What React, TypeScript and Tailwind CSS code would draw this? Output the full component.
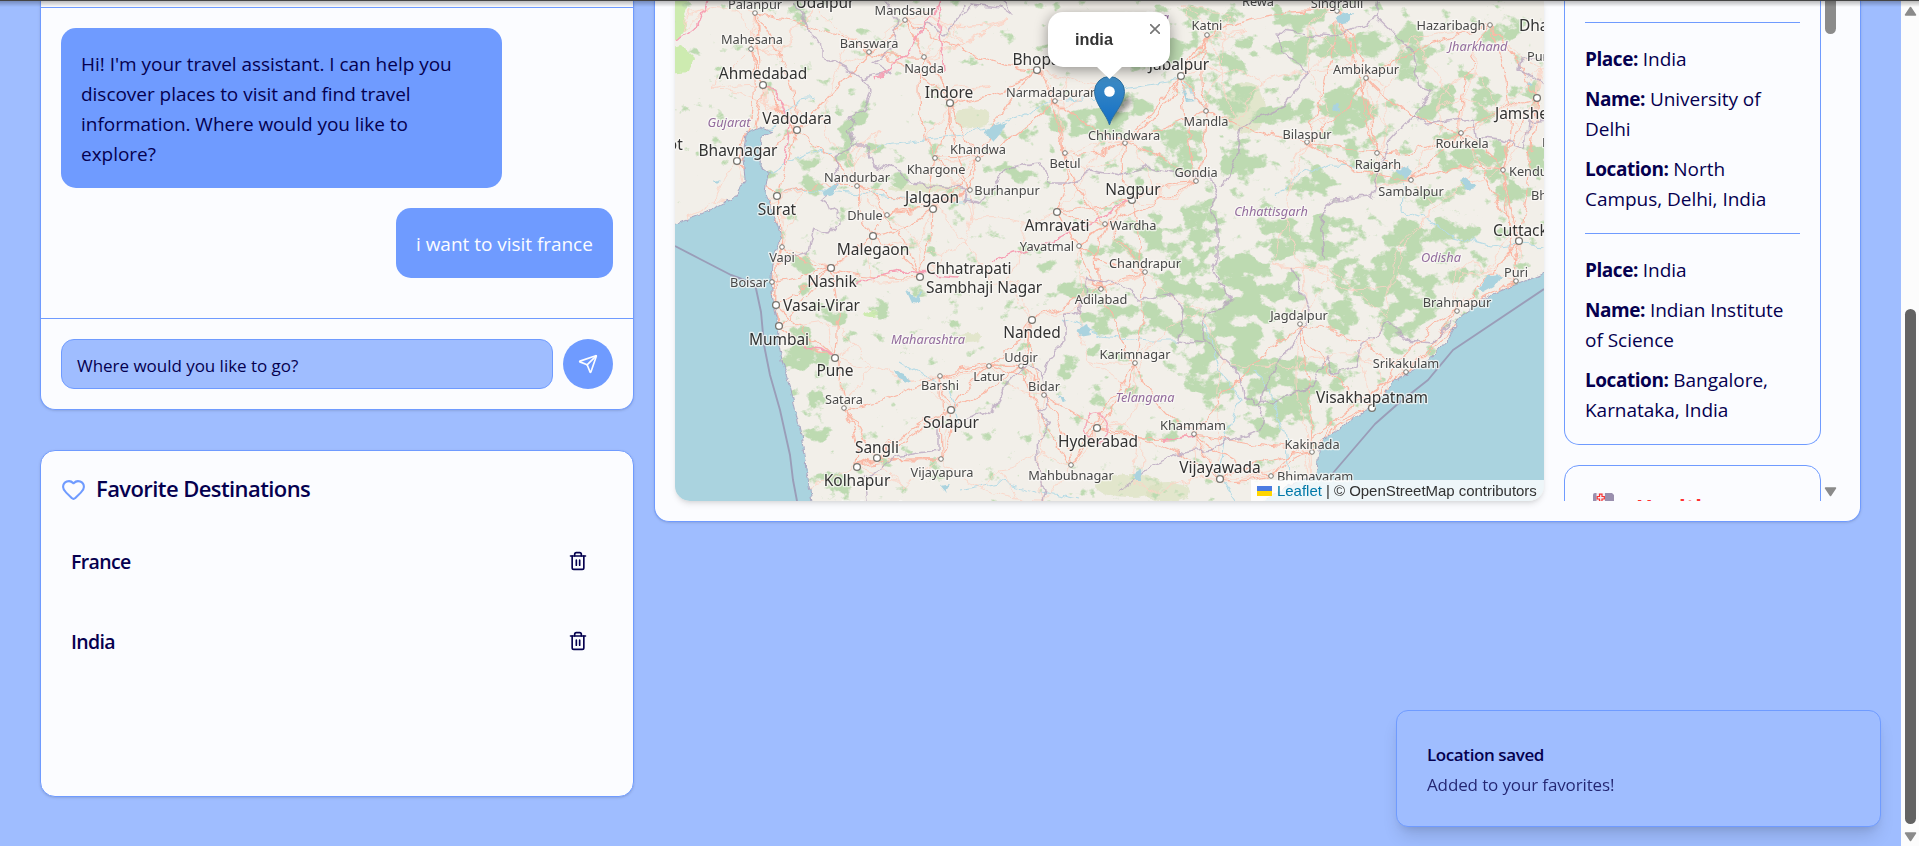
import React from "react";
import { Heart, Send } from "lucide-react";

type Place = {
  name: string;
  x: number;
  y: number;
  dot?: [number, number];
  big?: boolean;
  anchor?: "start" | "middle";
};

const places: Place[] = [
  { name: "Palanpur", x: 755, y: 4, dot: [755, 13] },
  { name: "Udaipur", x: 825, y: 2, big: true },
  { name: "Mandsaur", x: 905, y: 10, dot: [905, 20] },
  { name: "Mahesana", x: 752, y: 39, dot: [751, 49] },
  { name: "Banswara", x: 869, y: 43, dot: [869, 52] },
  { name: "Ahmedabad", x: 763, y: 73, dot: [763, 85], big: true },
  { name: "Nagda", x: 924, y: 68, dot: [924, 57] },
  { name: "Indore", x: 949, y: 92, dot: [950, 103], big: true },
  { name: "Vadodara", x: 797, y: 118, dot: [797, 130], big: true },
  { name: "Rajkot", x: 660, y: 144, big: true },
  { name: "Bhavnagar", x: 738, y: 150, dot: [737, 161], big: true },
  { name: "Khargone", x: 936, y: 169, dot: [935, 158] },
  { name: "Nandurbar", x: 857, y: 177, dot: [857, 186] },
  { name: "Surat", x: 777, y: 209, dot: [777, 196], big: true },
  { name: "Jalgaon", x: 932, y: 197, dot: [933, 209], big: true },
  { name: "Dhule", x: 865, y: 215, dot: [887, 215] },
  { name: "Malegaon", x: 873, y: 249, dot: [873, 236], big: true },
  { name: "Vapi", x: 782, y: 257, dot: [782, 247] },
  { name: "Bhopal", x: 1038, y: 59, dot: [1037, 70], big: true },
  { name: "Narmadapuram", x: 1054, y: 92, dot: [1055, 101] },
  { name: "Khandwa", x: 978, y: 149, dot: [978, 159] },
  { name: "Betul", x: 1065, y: 163, dot: [1065, 153] },
  { name: "Burhanpur", x: 1007, y: 190, dot: [970, 190] },
  { name: "Nagpur", x: 1133, y: 189, dot: [1132, 200], big: true },
  { name: "Amravati", x: 1057, y: 225, dot: [1057, 212], big: true },
  { name: "Wardha", x: 1133, y: 225, dot: [1105, 224] },
  { name: "Yavatmal", x: 1047, y: 246, dot: [1079, 246] },
  { name: "Chhindwara", x: 1124, y: 135, dot: [1125, 143] },
  { name: "Jabalpur", x: 1179, y: 64, dot: [1181, 76], big: true },
  { name: "Katni", x: 1207, y: 25, dot: [1207, 35] },
  { name: "Mandla", x: 1206, y: 121, dot: [1206, 111] },
  { name: "Gondia", x: 1196, y: 172, dot: [1196, 181] },
  { name: "Rewa", x: 1258, y: 1 },
  { name: "Singrauli", x: 1337, y: 3, dot: [1337, 11] },
  { name: "Hazaribagh", x: 1451, y: 25, dot: [1490, 25] },
  { name: "Dhanbad", x: 1519, y: 25, big: true, anchor: "start" },
  { name: "Puruliya", x: 1527, y: 56, anchor: "start" },
  { name: "Ambikapur", x: 1366, y: 69, dot: [1366, 78] },
  { name: "Jamshedpur", x: 1495, y: 113, dot: [1537, 98], big: true, anchor: "start" },
  { name: "Bilaspur", x: 1307, y: 134, dot: [1307, 142] },
  { name: "Baripada", x: 1542, y: 142, anchor: "start" },
  { name: "Rourkela", x: 1462, y: 143, dot: [1461, 133] },
  { name: "Raigarh", x: 1378, y: 164, dot: [1377, 153] },
  { name: "Kendujhar", x: 1509, y: 171, dot: [1503, 170], anchor: "start" },
  { name: "Sambalpur", x: 1411, y: 191, dot: [1411, 180] },
  { name: "Bhadrak", x: 1531, y: 195, anchor: "start" },
  { name: "Cuttack", x: 1493, y: 230, dot: [1519, 241], big: true, anchor: "start" },
  { name: "Boisar", x: 749, y: 282, dot: [772, 282] },
  { name: "Nashik", x: 832, y: 281, dot: [831, 268], big: true },
  { name: "Chhatrapati", x: 926, y: 268, dot: [920, 277], big: true, anchor: "start" },
  { name: "Sambhaji Nagar", x: 926, y: 287, big: true, anchor: "start" },
  { name: "Vasai-Virar", x: 783, y: 305, dot: [776, 305], big: true, anchor: "start" },
  { name: "Mumbai", x: 779, y: 339, dot: [779, 326], big: true },
  { name: "Pune", x: 835, y: 370, dot: [835, 358], big: true },
  { name: "Barshi", x: 940, y: 385, dot: [940, 376] },
  { name: "Satara", x: 844, y: 399, dot: [844, 408] },
  { name: "Solapur", x: 951, y: 422, dot: [951, 410], big: true },
  { name: "Sangli", x: 877, y: 447, dot: [877, 458], big: true },
  { name: "Kolhapur", x: 857, y: 480, dot: [857, 467], big: true },
  { name: "Vijayapura", x: 942, y: 472, dot: [941, 459] },
  { name: "Belagavi", x: 872, y: 507, big: true },
  { name: "Chandrapur", x: 1145, y: 263, dot: [1145, 272] },
  { name: "Adilabad", x: 1101, y: 299, dot: [1101, 289] },
  { name: "Nanded", x: 1032, y: 332, dot: [1032, 320], big: true },
  { name: "Udgir", x: 1021, y: 357, dot: [1021, 366] },
  { name: "Latur", x: 989, y: 376, dot: [989, 366] },
  { name: "Karimnagar", x: 1135, y: 354, dot: [1135, 363] },
  { name: "Bidar", x: 1044, y: 386, dot: [1044, 395] },
  { name: "Khammam", x: 1193, y: 425, dot: [1194, 434] },
  { name: "Hyderabad", x: 1098, y: 441, dot: [1097, 428], big: true },
  { name: "Mahbubnagar", x: 1071, y: 475, dot: [1071, 465] },
  { name: "Vijayawada", x: 1220, y: 467, dot: [1220, 479], big: true },
  { name: "Puri", x: 1516, y: 272, dot: [1516, 281] },
  { name: "Brahmapur", x: 1457, y: 302, dot: [1457, 311] },
  { name: "Jagdalpur", x: 1299, y: 315, dot: [1300, 324] },
  { name: "Srikakulam", x: 1406, y: 363, dot: [1406, 372] },
  { name: "Visakhapatnam", x: 1372, y: 397, dot: [1372, 408], big: true },
  { name: "Kakinada", x: 1312, y: 444, dot: [1312, 452] },
  { name: "Bhimavaram", x: 1277, y: 476, dot: [1271, 476], anchor: "start" },
];

const regions: [string, number, number][] = [
  ["Gujarat", 729, 122],
  ["Madhya", 1146, 17],
  ["Pradesh", 1146, 32],
  ["Jharkhand", 1478, 46],
  ["Chhattisgarh", 1271, 211],
  ["Odisha", 1441, 257],
  ["Maharashtra", 928, 339],
  ["Telangana", 1145, 397],
];

// cx, cy, rx, ry, density
const forests: [number, number, number, number, number][] = [
  [800, 12, 12, 15, 0.7], [850, 113, 24, 12, 0.6], [830, 160, 26, 8, 0.8], [870, 148, 30, 6, 0.7],
  [815, 185, 15, 9, 1], [885, 184, 28, 5, 0.7], [920, 240, 28, 7, 0.55], [848, 132, 8, 12, 0.9],
  [1085, 120, 42, 13, 1], [1040, 132, 24, 8, 0.7], [1010, 172, 30, 8, 0.75], [975, 202, 20, 5, 0.8],
  [1128, 108, 26, 10, 0.9], [1182, 150, 24, 26, 0.75], [1135, 168, 30, 7, 0.7], [1170, 62, 30, 8, 0.6],
  [1215, 14, 32, 12, 0.75], [1200, 48, 36, 10, 0.6], [1232, 95, 20, 24, 0.75], [1240, 160, 18, 24, 0.85],
  [1200, 225, 20, 24, 0.8], [1150, 240, 40, 18, 0.5], [1236, 55, 22, 18, 0.7], [1130, 40, 60, 25, 0.42],
  [1335, 45, 62, 13, 1], [1300, 18, 30, 12, 0.6], [1280, 114, 30, 10, 0.9], [1347, 108, 26, 20, 1],
  [1308, 108, 18, 14, 0.75], [1412, 55, 20, 28, 0.8], [1445, 95, 14, 12, 1], [1485, 102, 16, 15, 1],
  [1430, 115, 26, 8, 0.8], [1500, 30, 28, 14, 0.65], [1520, 92, 18, 6, 0.8], [1312, 185, 26, 11, 0.95],
  [1390, 176, 20, 8, 0.8], [1280, 238, 22, 20, 0.95], [1322, 242, 14, 24, 1], [1411, 238, 26, 20, 1],
  [1350, 236, 14, 18, 0.65], [1455, 228, 32, 12, 0.85], [1487, 160, 20, 18, 0.9], [1508, 196, 16, 16, 0.85],
  [1452, 158, 18, 12, 0.85], [1538, 160, 9, 16, 1], [1430, 200, 26, 8, 0.8], [1350, 140, 30, 12, 0.55],
  [1100, 255, 14, 12, 0.6], [1122, 318, 40, 13, 0.95], [1075, 285, 14, 12, 0.9], [1070, 362, 10, 16, 0.7],
  [1110, 356, 28, 6, 0.75], [1172, 285, 16, 16, 0.85], [1170, 325, 12, 12, 0.95], [1193, 325, 12, 18, 1],
  [1216, 325, 18, 16, 1], [1240, 285, 26, 34, 1], [1248, 345, 20, 26, 1], [1202, 360, 20, 18, 1],
  [1215, 388, 24, 9, 0.95], [1255, 380, 14, 24, 1], [1096, 393, 10, 12, 0.75], [1265, 300, 14, 30, 0.95],
  [1293, 295, 10, 24, 0.8], [1388, 285, 30, 36, 0.9], [1340, 320, 12, 20, 1], [1290, 385, 30, 22, 0.9],
  [1270, 425, 15, 18, 0.95], [1425, 300, 18, 22, 0.75], [1335, 375, 20, 14, 0.6], [1400, 328, 22, 8, 0.9],
  [1310, 415, 24, 12, 0.7], [1350, 280, 16, 22, 0.75], [1460, 265, 22, 16, 0.65],
  [1195, 270, 18, 30, 0.65], [1045, 262, 20, 8, 0.4],
  [805, 275, 9, 26, 0.85], [798, 348, 16, 24, 0.85], [828, 312, 22, 14, 0.6], [820, 400, 9, 16, 1],
  [823, 432, 7, 18, 0.9], [835, 486, 13, 14, 0.95], [875, 310, 24, 8, 0.6], [815, 360, 14, 12, 0.8],
];

const pale: [number, number, number, number][] = [
  [1130, 486, 34, 12], [1168, 492, 22, 10], [972, 118, 18, 10], [920, 188, 32, 4], [1245, 108, 20, 26], [968, 338, 14, 5],
];

const borders: string[] = [
  "793,3 807,23 810,37 823,47 823,57 850,70 863,80 870,93 860,115 848,117 858,123 848,130 853,147 833,157 840,183 820,200 837,210 838,223 830,233 813,227 807,253 793,257 782,262",
  "863,80 890,72 873,62 893,50 898,20 885,0",
  "853,147 867,147 873,163 903,173 910,183 945,187 967,190 965,200 980,203 1010,167 1040,163 1047,183 1067,183 1093,172 1120,178 1147,167 1173,173 1207,177 1220,190 1210,207 1217,227 1217,260 1213,267 1223,293 1233,300 1217,307 1203,323 1205,343 1240,373 1243,397 1260,403 1280,397 1313,387 1325,357 1335,373 1357,367 1360,347 1390,323 1407,340 1430,342 1453,322",
  "1205,343 1180,340 1183,307 1173,293 1140,300 1120,285 1088,278 1080,313 1063,312 1067,340 1050,357 1043,377 1027,363 1010,383 997,405 977,417 937,428 937,450 897,457 873,473 863,480 866,501",
  "1043,377 1047,403 1040,413 1050,423 1037,440 1040,483 1048,490 1045,501",
  "1223,187 1237,157 1243,130 1260,117 1283,107 1310,70 1280,52 1278,32 1330,37 1377,18 1397,37 1413,50 1420,87 1433,90 1413,115 1387,143 1388,157 1377,173 1370,197 1333,200 1320,217 1323,260",
  "1413,115 1425,125 1473,119 1475,137 1500,140 1525,148 1528,120 1544,118",
  "1293,267 1310,317 1270,377 1263,403",
  "1377,18 1380,0", "1544,86 1530,76 1518,70 1520,55 1544,58",
  "1120,490 1145,470 1185,452 1210,448 1230,440 1260,430 1263,403",
  "960,18 970,5 1000,8 1010,15 1005,0",
  "917,30 930,22 945,35 958,18 962,5",
];

const westSea =
  "675,224 700,214 718,206 735,197 745,180 743,157 746,133 760,127 773,133 762,137 760,166 768,172 765,193 773,213 780,233 778,245 772,262 771,280 773,300 777,318 778,340 782,360 790,385 796,412 801,435 805,462 809,485 812,503 670,503 670,226";
const eastSea =
  "1548,272 1516,285 1490,295 1460,317 1447,340 1427,363 1393,382 1377,403 1337,430 1320,443 1318,460 1317,473 1290,485 1262,503 1548,503";

const lakes = [
  "823,192 838,182 834,194 825,197", "984,132 993,126 1006,122 1000,135 994,142 988,136",
  "1335,17 1345,13 1353,13 1348,22 1337,24", "1396,170 1408,166 1412,174 1404,180",
  "1332,104 1338,103 1340,110 1333,112", "1460,180 1468,177 1476,188 1466,190",
  "1478,290 1488,276 1502,275 1494,286 1483,292", "906,290 916,297 921,292 920,304 912,303",
  "1076,330 1088,325 1091,334 1080,336", "895,370 905,374 910,383 898,378", "1133,475 1141,470 1142,480 1134,480",
  "1058,393 1066,402 1062,403", "1182,88 1188,98 1195,100 1186,101", "1528,83 1532,86 1529,87",
  "940,486 950,484 945,492", "715,182 722,180 717,184",
];

const rivers = [
  "871,146 920,140 960,135 990,128 1010,120 1050,101 1100,98 1130,88 1180,80 1205,108",
  "768,173 790,160 810,150 830,155", "776,196 800,190 825,192 870,196 930,200 970,200",
  "1205,323 1220,370 1240,400 1225,440 1220,479 1235,501", "1280,195 1300,175 1330,165 1360,166 1396,170",
  "1404,180 1402,210 1430,220 1450,235 1490,246 1520,243 1544,246", "960,490 1000,482 1030,489 1080,500",
  "1060,320 1100,335 1150,340 1180,340", "770,131 790,110 800,100 815,98", "1255,370 1270,395 1285,430 1290,470",
  "900,360 950,390 960,420",
];

function noise(seed: number) {
  const v = Math.sin(seed * 127.1 + 311.7) * 43758.5453;
  return v - Math.floor(v);
}

function buildRoads(nodes: [number, number][], links: number, salt: number): string {
  const seen = new Set<string>();
  let d = "";
  nodes.forEach(([x, y], i) => {
    nodes
      .map(([a, b], j) => ({ j, dist: Math.hypot(a - x, b - y) }))
      .filter((n) => n.j !== i)
      .sort((a, b) => a.dist - b.dist)
      .slice(0, links)
      .forEach(({ j, dist }) => {
        const key = i < j ? i + "-" + j : j + "-" + i;
        if (seen.has(key)) return;
        seen.add(key);
        const [a, b] = nodes[j];
        const k = (noise(i * 13 + j * 7 + salt) - 0.5) * dist * 0.35;
        const nx = (-(b - y) / (dist || 1)) * k;
        const ny = ((a - x) / (dist || 1)) * k;
        d += `M${x} ${y}Q${((x + a) / 2 + nx).toFixed(1)} ${((y + b) / 2 + ny).toFixed(1)} ${a} ${b}`;
      });
  });
  return d;
}

const cityNodes = places.filter((p) => p.dot).map((p) => p.dot as [number, number]);
const extraNodes: [number, number][] = Array.from({ length: 170 }, (_, i) => [
  Math.round(675 + noise(i + 1) * 869),
  Math.round(noise(i * 3 + 500) * 501),
]);
const mainRoads = buildRoads(cityNodes, 4, 3);
const minorRoads = buildRoads([...cityNodes, ...extraNodes], 3, 9);

function MapCanvas() {
  return (
    <svg className="block h-[501px] w-[869px]" viewBox="675 0 869 501" fontFamily="'Noto Sans', 'Open Sans', sans-serif">
      <defs>
        <filter id="forest" x="675" y="0" width="869" height="501" filterUnits="userSpaceOnUse">
          <feGaussianBlur in="SourceGraphic" stdDeviation="4" result="soft" />
          <feTurbulence type="fractalNoise" baseFrequency="0.055 0.07" numOctaves="5" seed="8" result="n" />
          <feComposite in="soft" in2="n" operator="arithmetic" k1="0" k2="0.68" k3="1.8" k4="-0.82" />
          <feComponentTransfer result="mask">
            <feFuncA type="linear" slope="5" intercept="-2" />
          </feComponentTransfer>
          <feFlood floodColor="#bddab1" />
          <feComposite in2="mask" operator="in" />
        </filter>
        <filter id="wobble" x="675" y="-10" width="869" height="520" filterUnits="userSpaceOnUse">
          <feTurbulence type="fractalNoise" baseFrequency="0.06" numOctaves="3" seed="4" />
          <feDisplacementMap in="SourceGraphic" scale="13" xChannelSelector="R" yChannelSelector="G" />
        </filter>
        <filter id="coast" x="665" y="-10" width="889" height="530" filterUnits="userSpaceOnUse">
          <feTurbulence type="fractalNoise" baseFrequency="0.12" numOctaves="3" seed="2" />
          <feDisplacementMap in="SourceGraphic" scale="6" xChannelSelector="R" yChannelSelector="G" />
        </filter>
        <filter id="pinShadow" x="-50%" y="-50%" width="200%" height="200%">
          <feGaussianBlur stdDeviation="2.6" />
        </filter>
        <linearGradient id="pin" x1="0" y1="0" x2="0" y2="1">
          <stop offset="0" stopColor="#3f8cc4" />
          <stop offset="1" stopColor="#126fc6" />
        </linearGradient>
      </defs>
      <rect x="675" y="0" width="869" height="501" fill="#f2efe9" />
      <g fill="#cdebb0" filter="url(#coast)">
        <path d="M670 0H690L684 14L688 26L678 40H670ZM670 48L682 46L694 58L688 72L670 74Z" />
        <ellipse cx="872" cy="314" rx="10" ry="3" />
      </g>
      <g fill="#d9e0bd" filter="url(#coast)">
        {pale.map(([x, y, rx, ry], i) => (
          <ellipse key={i} cx={x} cy={y} rx={rx} ry={ry} opacity={0.65} />
        ))}
      </g>
      <g filter="url(#forest)">
        <rect x="1130" y="0" width="414" height="440" opacity="0.12" />
        {forests.map(([x, y, rx, ry, o], i) => (
          <ellipse key={i} cx={x} cy={y} rx={rx} ry={ry} opacity={o} />
        ))}
      </g>
      <g filter="url(#wobble)" fill="none" strokeLinejoin="round">
        {rivers.map((p) => (
          <polyline key={p} points={p} stroke="#b5dbe6" strokeWidth="1.1" />
        ))}
        <path d={minorRoads} stroke="#fbd3c5" strokeWidth="0.85" />
        <path d={mainRoads} stroke="#fbb7a4" strokeWidth="1.15" />
        {borders.map((p) => (
          <polyline key={p} points={p} stroke="#b7a3bd" strokeWidth="1.5" opacity="0.75" />
        ))}
        <path
          d="M677 42L698 25L708 0M763 85L780 100L790 125L785 165M876 81L905 55L940 3M938 5L945 72M855 282L900 272L960 276M992 260L1040 245L1095 221L1132 200M800 345L820 348L835 358M1164 438L1180 437L1194 434"
          stroke="#f6a0b4"
          strokeWidth="1.6"
        />
        <ellipse cx="1097" cy="427" rx="13" ry="13" stroke="#f6a6b6" strokeWidth="1.4" />
      </g>
      <g filter="url(#coast)">
        {lakes.map((p) => (
          <polygon key={p} points={p} fill="#aad3df" />
        ))}
        <polygon points={westSea} fill="#aad3df" stroke="#a9a6c0" strokeWidth="1" />
        <polygon points={eastSea} fill="#aad3df" stroke="#a9a6c0" strokeWidth="1" />
      </g>
      <g fill="none" stroke="#9a9db8" strokeWidth="1.9" strokeLinejoin="round">
        <polyline points="675,246 700,259 731,275 755,284 761,312 764,345 770,375 780,410 790,455 793,480 797,501" />
        <polyline points="1544,289 1453,350 1428,380 1400,402 1375,424 1333,473" />
      </g>
      {places.map((p) =>
        p.dot ? (
          <circle
            key={p.name}
            cx={p.dot[0]}
            cy={p.dot[1]}
            r={p.big ? 3.4 : 2.3}
            fill="#fff"
            stroke="#77756f"
            strokeWidth={p.big ? 1.3 : 1}
          />
        ) : null,
      )}
      <g stroke="#fbfaf7" strokeOpacity="0.75" strokeWidth="2.6" strokeLinejoin="round" paintOrder="stroke">
        {places.map((p) => (
          <text
            key={p.name}
            x={p.x}
            y={p.y + (p.big ? 5.5 : 4.5)}
            fontSize={p.big ? 15.5 : 12.8}
            fill={p.big ? "#333" : "#484848"}
            textAnchor={p.anchor ?? "middle"}
          >
            {p.name}
          </text>
        ))}
        {regions.map(([t, x, y]) => (
          <text key={t} x={x} y={y + 4.5} fontSize="12.8" fontStyle="italic" fill="#936c9d" textAnchor="middle">
            {t}
          </text>
        ))}
      </g>
      <path d="M1109 124L1130 104Q1134 95 1124 97L1112 108Z" fill="#000" opacity="0.38" filter="url(#pinShadow)" />
      <path
        d="M1109.500 125C1107 115 1094.500 104 1094.500 91.500A15 15 0 0 1 1124.500 91.500C1124.500 104 1112 115 1109.500 125Z"
        fill="url(#pin)"
        stroke="#2e6f9e"
        strokeWidth="1"
      />
      <circle cx="1109.500" cy="91.500" r="5.300" fill="#fff" />
    </svg>
  );
}

function TrashIcon() {
  return (
    <svg className="size-5" viewBox="0 0 24 24" fill="none" stroke="currentColor" strokeWidth="2" strokeLinecap="round" strokeLinejoin="round">
      <path d="M3 6h18" />
      <path d="M19 6v14c0 1-1 2-2 2H7c-1 0-2-1-2-2V6" />
      <path d="M8 6V4c0-1 1-2 2-2h4c1 0 2 1 2 2v2" />
      <path d="M10 11v6M14 11v6" />
    </svg>
  );
}

function Favorite({ name }: { name: string }) {
  return (
    <div className="flex h-[80px] items-center justify-between pr-[25px] pl-[10px]">
      <span className="pt-[2px] text-[19.5px] font-semibold tracking-[-0.65px]">{name}</span>
      <TrashIcon />
    </div>
  );
}

function Field({ label, lines }: { label: string; lines: string[] }) {
  return (
    <p className="mb-[10px] leading-[30px] whitespace-nowrap">
      <strong className="font-bold tracking-[-0.45px]">{label}:</strong> {lines[0]}
      {lines.slice(1).map((l) => (
        <span key={l} className="block">
          {l}
        </span>
      ))}
    </p>
  );
}

function Triangle({ down }: { down?: boolean }) {
  return (
    <svg className="h-[10px] w-[13px] shrink-0" viewBox="0 0 13 10">
      <path
        d={down ? "M1.500 1H11.500L6.500 8.500Z" : "M1.500 9H11.500L6.500 1.500Z"}
        fill="#8b8b8b"
        stroke="#8b8b8b"
        strokeWidth="1.500"
        strokeLinejoin="round"
      />
    </svg>
  );
}

export default function App() {
  return (
    <div className="relative flex h-[846px] w-full overflow-hidden bg-[#9fbdff] font-['Open_Sans','Noto_Sans',sans-serif] text-[19px] tracking-[-0.03px] text-[#05004f]">
      <main className="flex min-w-0 flex-1 items-start gap-[20px] pl-[40px]">
        <div className="flex w-[594px] shrink-0 flex-col gap-[40px]">
          <section className="h-[410px] overflow-hidden rounded-b-[15px] border border-t-0 border-[#6f9bff] bg-[#fbfcff] shadow-sm">
            <div className="h-[8px] border-b border-[#6f9bff]" />
            <div className="flex h-[310px] flex-col gap-5 px-5 pt-5">
              <div className="h-[160px] w-[441px] rounded-[15px] bg-[#6f9bff] px-5 pt-[21px] leading-[30px] whitespace-nowrap">
                Hi! I'm your travel assistant. I can help you
                <br />
                discover places to visit and find travel
                <br />
                information. Where would you like to
                <br />
                explore?
              </div>
              <div className="h-[70px] w-[217px] self-end rounded-[15px] bg-[#6f9bff] px-5 pt-[21px] leading-[30px] whitespace-nowrap text-[#fbfcff]">
                i want to visit france
              </div>
            </div>
            <div className="flex gap-[10px] border-t border-[#6f9bff] px-5 pt-5">
              <div className="flex h-[50px] w-[492px] items-center rounded-[13px] border border-[#6f9bff] bg-[#9fbdff] px-[15px] pt-[3px] text-[17px]">
                Where would you like to go?
              </div>
              <button className="flex size-[50px] items-center justify-center rounded-full bg-[#6f9bff] text-[#fbfcff]">
                <Send className="size-5" />
              </button>
            </div>
          </section>

          <section className="h-[347px] rounded-[15px] border border-[#6f9bff] bg-[#fbfcff] px-5 pt-[22px] shadow-sm">
            <div className="flex h-[32px] items-center gap-[10px]">
              <Heart className="size-[25px] text-[#6f9bff]" />
              <h2 className="pb-[1px] text-[22px] font-semibold tracking-[-0.58px]">Favorite Destinations</h2>
            </div>
            <div className="pt-[16px]">
              <Favorite name="France" />
              <Favorite name="India" />
            </div>
          </section>
        </div>

        <section className="flex h-[522px] w-[1207px] shrink-0 rounded-b-[15px] border border-t-0 border-[#6f9bff] bg-[#fbfcff] pl-[20px] shadow-sm">
          <div className="relative h-[501px] w-[869px] shrink-0 overflow-hidden rounded-b-[15px] shadow-md">
            <MapCanvas />
            <div className="absolute top-[12px] left-[373px] h-[55px] w-[122px] rounded-[15px] bg-white font-['Liberation_Sans',Arial,sans-serif] tracking-normal text-[#333] shadow-[0_3px_14px_rgba(0,0,0,0.4)]">
              <span className="absolute top-[16px] left-[27px] text-[16.25px] leading-[22px] font-bold">india</span>
              <svg className="absolute top-[12px] left-[102px] size-[10px]" viewBox="0 0 10 10" stroke="#757575" strokeWidth="1.600">
                <path d="M0 0L10 10M10 0L0 10" />
              </svg>
              <svg className="absolute top-[54px] left-[48px] h-[13px] w-[27px]" viewBox="0 0 27 13">
                <path d="M0 0H27L13.500 13Z" fill="#fff" />
              </svg>
            </div>
            <div className="absolute right-0 bottom-0 flex h-[21px] w-[293px] items-center bg-white/80 pt-[1px] pl-[6px] font-['Liberation_Sans',Arial,sans-serif] text-[15px] tracking-[-0.03px] whitespace-pre text-[#333]">
              <svg className="mr-[5px] h-[10px] w-[15px]" viewBox="0 0 15 10">
                <path d="M0 0H15V5H0Z" fill="#4c7be1" />
                <path d="M0 5H15V10H0Z" fill="#ffd500" />
              </svg>
              <span className="text-[#0078a8]">Leaflet</span>
              <span> | © OpenStreetMap contributors</span>
            </div>
          </div>

          <div className="ml-[20px] flex h-[501px] w-[257px] shrink-0 flex-col gap-[20px] overflow-hidden">
            <div className="h-[445px] shrink-0 rounded-b-[15px] border border-t-0 border-[#6f9bff] px-5">
              <div className="h-[22px]" />
              <div className="border-t border-[#6f9bff] pt-[21px]">
                <Field label="Place" lines={["India"]} />
                <Field label="Name" lines={["University of", "Delhi"]} />
                <Field label="Location" lines={["North", "Campus, Delhi, India"]} />
              </div>
              <div className="mt-[19px] border-t border-[#6f9bff] pt-[21px]">
                <Field label="Place" lines={["India"]} />
                <Field label="Name" lines={["Indian Institute", "of Science"]} />
                <Field label="Location" lines={["Bangalore,", "Karnataka, India"]} />
              </div>
            </div>
            <div className="flex h-[120px] shrink-0 items-start gap-[22px] rounded-[15px] border border-[#6f9bff] pt-[27px] pl-[28px]">
              <svg className="h-[22px] w-[21px] shrink-0" viewBox="0 0 21 22">
                <path d="M0 2Q0 0 2 0H19L21 2V22H0Z" fill="#9a8fae" />
                <path d="M3.500 0H12V22H3.500Z" fill="#f4eef4" />
                <path d="M6.500 1.200H9V3.500H11.300V6H9V8.300H6.500V6H4.200V3.500H6.500Z" fill="none" stroke="#f8312f" strokeWidth="1.200" />
              </svg>
              <span className="pt-[2px] text-[22px] leading-[22px] font-bold text-[#ff3030]">Health</span>
            </div>
          </div>

          <div className="ml-[3px] flex h-[497px] w-[13px] flex-col items-center justify-between">
            <div className="h-[34px] w-[11px] rounded-b-[6px] bg-[#8b8b8b]" />
            <Triangle down />
          </div>
        </section>
      </main>

      <div className="flex h-full w-[18px] shrink-0 flex-col items-center bg-[#fcfcfc] pt-[6px]">
        <Triangle />
        <div className="mt-[293px] h-[515px] w-[11px] rounded-full bg-[#636363]" />
        <div className="mt-[8px] flex">
          <Triangle down />
        </div>
      </div>

      <div className="absolute top-[710px] left-[1396px] h-[117px] w-[485px] rounded-[12px] border border-[#6f9bff] bg-[#9fbdff] pt-[29px] pl-[30px] text-[17px] leading-[30px] shadow-[0_12px_18px_-4px_rgba(0,0,0,0.14),0_5px_8px_-5px_rgba(0,0,0,0.12)]">
        <p className="font-semibold tracking-[-0.4px]">Location saved</p>
        <p className="tracking-[-0.13px] opacity-80">Added to your favorites!</p>
      </div>

      <div className="absolute top-0 left-0 h-[7px] w-[1919px] bg-linear-to-b from-black/30 to-transparent" />
      <div className="absolute top-0 left-0 h-px w-[1919px] bg-[#444]" />
    </div>
  );
}
